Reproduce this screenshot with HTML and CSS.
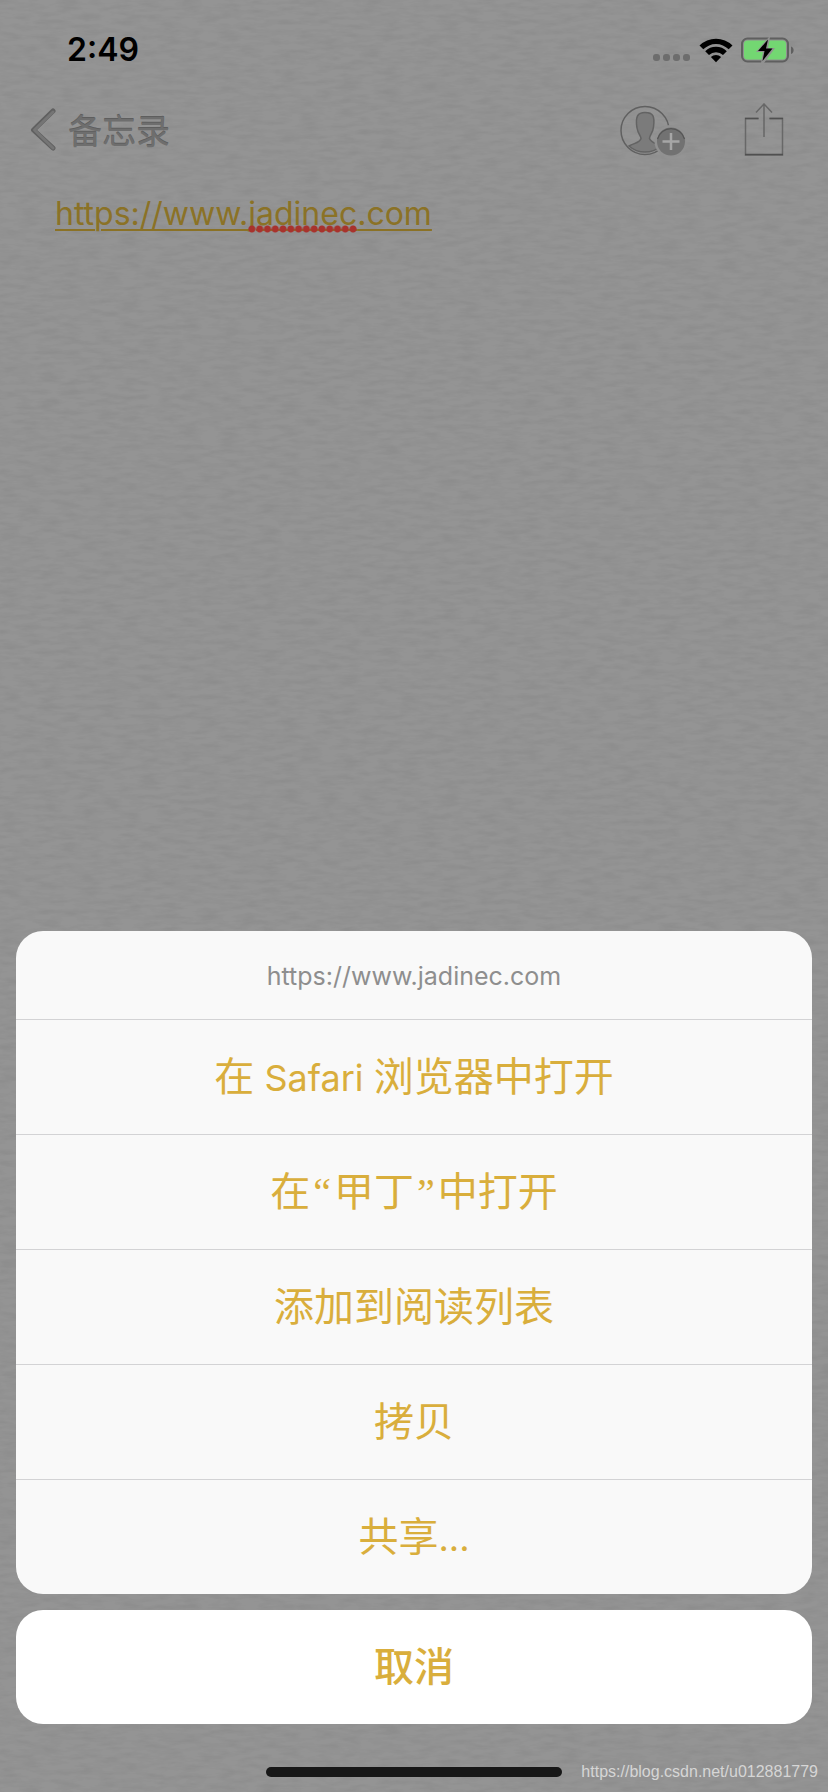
FILE: index.html
```html
<!DOCTYPE html>
<html lang="zh-CN">
<head>
<meta charset="utf-8">
<meta name="viewport" content="width=device-width, initial-scale=1">
<title>备忘录</title>
<link rel="stylesheet" href="styles.css">
</head>
<body>
<div class="screen">
  <svg class="paper" aria-hidden="true">
    <filter id="grain" x="0" y="0" width="100%" height="100%">
      <feTurbulence type="fractalNoise" baseFrequency="0.05 0.2" numOctaves="3" seed="4"/>
      <feColorMatrix values="0 0 0 0 0  0 0 0 0 0  0 0 0 0 0  0.9 0 0 0 -0.33"/>
    </filter>
    <rect width="100%" height="100%" filter="url(#grain)"/>
  </svg>

  <header class="status">
    <time class="clock">2:49</time>
    <div class="indicators">
      <svg class="signal" width="38" height="26" viewBox="0 0 38 26" aria-hidden="true">
        <g fill="#6d6d6d"><rect y="17" width="7" height="7" rx="3"/><rect x="10" y="17" width="7" height="7" rx="3"/><rect x="20" y="17" width="7" height="7" rx="3"/><rect x="30" y="17" width="7" height="7" rx="3"/></g>
      </svg>
      <svg class="wifi" width="34" height="26" viewBox="0 0 34 26" aria-hidden="true">
        <path d="M0.500 8.500A23.500 23.500 0 0 1 33.500 8.500L29.700 12.300A18 18 0 0 0 4.300 12.300Z"/>
        <path d="M6.200 14.200A15.300 15.300 0 0 1 27.800 14.200L24 18A10 10 0 0 0 10 18Z"/>
        <path d="M11.900 20A7.300 7.300 0 0 1 22.100 20L17 25.200Z"/>
      </svg>
      <svg class="battery" width="54" height="26" viewBox="0 0 54 26" aria-hidden="true">
        <rect x="1" y="1.500" width="46" height="23" rx="5.500" fill="#919191" stroke="#5f5f5f" stroke-width="2"/>
        <rect x="3" y="3.500" width="42" height="19" rx="3.500" fill="#73d772"/>
        <path d="M28 0L15 15h7L20 26h3L34 11h-7L29 0z" fill="#919191"/>
        <path d="M27 2.500L17 14h6.500L21.500 24L31.500 11.500H25z"/>
        <path d="M50 9.500c3.500 1 3.500 6.500 0 7.500z" fill="#5f5f5f"/>
      </svg>
    </div>
  </header>

  <nav class="toolbar">
    <button class="back" type="button">
      <svg width="28" height="44" viewBox="0 0 28 44" aria-hidden="true">
        <path d="M24 3L4.500 22L24 40" fill="none" stroke="#606060" stroke-width="5" stroke-linecap="round" stroke-linejoin="round"/>
        <path d="M24 4L5.500 22L24 40" fill="none" stroke="#757575" stroke-width="3" stroke-linecap="round" stroke-linejoin="round"/>
      </svg>
      <span class="back-label">备忘录</span>
    </button>
    <div class="actions">
      <button class="tool" type="button" aria-label="添加个人">
        <svg width="66" height="54" viewBox="0 0 66 54" fill="none" aria-hidden="true">
          <circle cx="25" cy="27.500" r="24" stroke="#606060" stroke-width="1.500"/>
          <path d="M9 43C14 40 20 40 21 35.500C21 33 18 31 17 25C15 13 18 9.500 25 9.500C33 9.500 35 13 33.500 24C33 30 29.500 32 29.500 35.500C31 40 36 40 41 43A24 24 0 0 1 9 43Z" fill="#7b7b7b" stroke="#636363" stroke-width="1.500"/>
          <circle cx="51" cy="38.500" r="16.500" fill="#919191"/>
          <circle cx="51" cy="38.500" r="14" fill="#727272"/>
          <path d="M37.500 36A14 14 0 0 1 64.500 36" stroke="#555" stroke-width="1.200"/>
          <path d="M51 30v17M42.500 38.500h17" stroke="#a6a6a6" stroke-width="2.500"/>
        </svg>
      </button>
      <button class="tool" type="button" aria-label="共享">
        <svg width="40" height="54" viewBox="0 0 40 54" fill="none" stroke-width="1.500" aria-hidden="true">
          <path d="M14.500 15.500H1.500V52H38.500V15.500H25.500" stroke="#686868"/>
          <path d="M14.500 15.500H1M39 15.500H25.500M1 51.500H39" stroke="#505050"/>
          <path d="M20 34V1M12 9.500L20 1L28 9.500" stroke="#676767"/>
        </svg>
      </button>
    </div>
  </nav>

  <main class="note">
    <a class="link" href="https://www.jadinec.com">https://www.<span class="misspelt">jadinec</span>.com</a>
  </main>

  <div class="sheet" role="dialog" aria-labelledby="sheet-title">
    <div class="group">
      <p class="title" id="sheet-title">https://www.jadinec.com</p>
      <button class="option" type="button">在<span class="latin"> Safari </span>浏览器中打开</button>
      <button class="option" type="button">在<span class="quote">“</span>甲丁<span class="quote">”</span>中打开</button>
      <button class="option" type="button">添加到阅读列表</button>
      <button class="option" type="button">拷贝</button>
      <button class="option" type="button">共享<span class="latin">...</span></button>
    </div>
    <button class="option cancel" type="button">取消</button>
  </div>

  <footer class="bottom">
    <div class="home"></div>
    <small class="credit">https://blog.csdn.net/u012881779</small>
  </footer>
</div>
</body>
</html>
```

FILE: styles.css
```css
* {
  box-sizing: border-box;
}

body {
  margin: 0;
  background: #949494;
  font-family: Inter, "Noto Sans CJK SC", sans-serif;
}

button {
  margin: 0;
  padding: 0;
  border: 0;
  background: none;
  font: inherit;
  color: inherit;
}

svg {
  display: block;
}

p {
  margin: 0;
}

.screen {
  position: relative;
  display: flex;
  flex-direction: column;
  min-height: 100vh;
  isolation: isolate;
}

.paper {
  position: absolute;
  inset: 0;
  z-index: -1;
  width: 100%;
  height: 100%;
  opacity: 0.1;
}

.status {
  display: flex;
  align-items: center;
  justify-content: space-between;
  height: 98px;
  padding: 2px 33px 0 67px;
}

.clock {
  font-size: 32px;
  font-weight: 600;
  line-height: 40px;
}

.indicators {
  display: flex;
  gap: 8px;
}

.toolbar {
  display: flex;
  align-items: center;
  justify-content: space-between;
  height: 66px;
  padding: 0 44px 2px 29px;
}

.back {
  display: flex;
  align-items: center;
  gap: 11px;
  color: #6e6e6e;
  font-size: 34px;
  line-height: 44px;
  text-shadow: 0 -1px 0 #5e5e5e;
}

.back-label {
  padding-top: 4px;
}

.actions {
  display: flex;
  gap: 58px;
}

.note {
  flex: 1;
  padding: 28px 55px;
}

.link {
  color: #8b7226;
  font-size: 32px;
  line-height: 44px;
  text-decoration: underline;
  text-decoration-thickness: 2px;
  text-underline-offset: 4px;
}

.misspelt {
  position: relative;
}

.misspelt::after {
  content: "";
  position: absolute;
  inset: auto 0 0 0;
  height: 8px;
  background: radial-gradient(circle, #a8322d 3px, transparent 4px) 0 0 / 8px 8px round;
}

.sheet {
  display: flex;
  flex-direction: column;
  gap: 16px;
  padding: 0 16px;
}

.group {
  overflow: hidden;
  border-radius: 27px;
  background: #f9f9f9;
}

.title {
  padding-top: 2px;
  color: #8e8e8e;
  font-size: 25px;
  line-height: 86px;
  text-align: center;
}

.option {
  display: block;
  width: 100%;
  height: 115px;
  border-top: 1px solid #d3d3d5;
  color: #d9ae3c;
  font-size: 40px;
  line-height: 60px;
  text-align: center;
}

.latin {
  font-size: 36px;
}

.quote {
  margin: 0 3px;
  font-family: "Liberation Serif", serif;
}

.cancel {
  height: 114px;
  border: 0;
  border-radius: 27px;
  background: #fff;
  font-weight: 500;
}

.bottom {
  display: grid;
  grid-template-columns: 1fr 296px 1fr;
  align-items: center;
  height: 68px;
  padding-top: 28px;
}

.home {
  grid-column: 2;
  height: 10px;
  border-radius: 5px;
  background: #171717;
}

.credit {
  justify-self: end;
  margin-right: 10px;
  color: #d6d6d6;
  font-family: "Liberation Sans", sans-serif;
  font-size: 16px;
  line-height: 20px;
  white-space: nowrap;
}
```
